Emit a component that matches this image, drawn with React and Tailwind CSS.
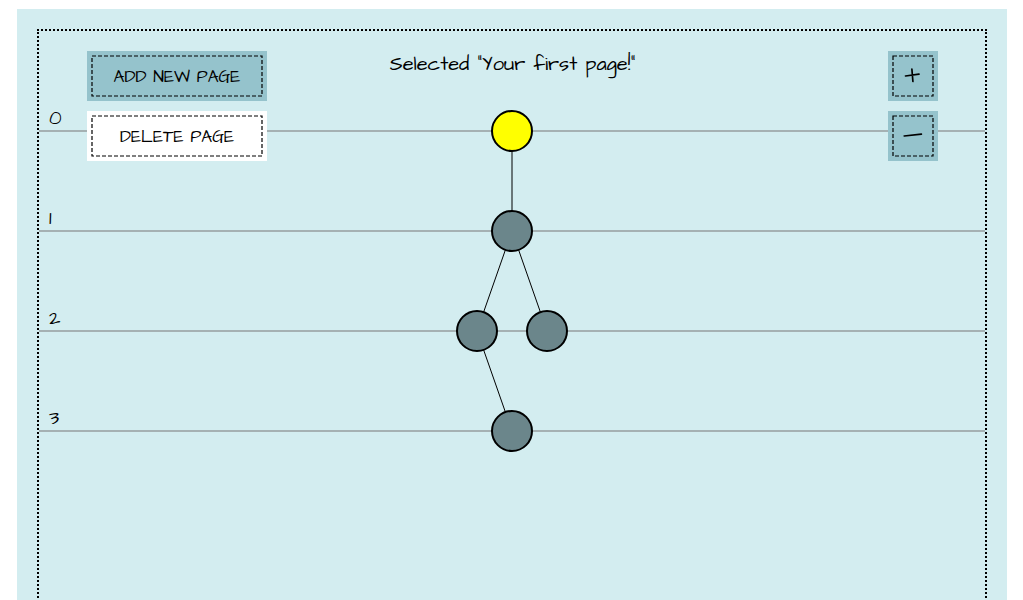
import React from "react";

const LEVELS = [0, 1, 2, 3];

const NODES = [
  { id: "first", x: 0, y: 100, selected: true },
  { id: "second", x: 0, y: 200 },
  { id: "left", x: -35, y: 300 },
  { id: "right", x: 35, y: 300 },
  { id: "last", x: 0, y: 400 },
];

const EDGES = [
  ["first", "second"],
  ["second", "left"],
  ["second", "right"],
  ["left", "last"],
];

const nodeById = (id) => NODES.find((node) => node.id === id);

function StitchedButton({ children, label, className }) {
  return (
    <button
      type="button"
      aria-label={label}
      className={`relative flex h-[50px] items-center justify-center text-black ${className}`}
    >
      <svg aria-hidden="true" className="absolute inset-[5px] h-[40px] w-[calc(100%-10px)] overflow-visible">
        <rect width="100%" height="100%" fill="none" stroke="#000" strokeWidth="1.2" strokeDasharray="4 2" />
      </svg>
      {children}
    </button>
  );
}

function HandDrawnIcon({ d }) {
  return (
    <svg viewBox="0 0 24 24" className="h-6 w-6" fill="none" stroke="#000" strokeWidth="1.7" strokeLinecap="round">
      <path d={d} />
    </svg>
  );
}

function Tree() {
  return (
    <svg
      role="img"
      aria-label="Page tree"
      viewBox="-60 0 120 440"
      className="absolute top-0 left-1/2 h-[440px] w-[120px] -translate-x-1/2"
    >
      {EDGES.map(([from, to]) => {
        const a = nodeById(from);
        const b = nodeById(to);
        return <line key={from + to} x1={a.x} y1={a.y} x2={b.x} y2={b.y} stroke="#000" />;
      })}
      {NODES.map((node) => (
        <circle
          key={node.id}
          cx={node.x}
          cy={node.y}
          r="20"
          stroke="#000"
          strokeWidth="2"
          fill={node.selected ? "#ffff00" : "#6b868b"}
        />
      ))}
    </svg>
  );
}

export default function App() {
  return (
    <div className="h-screen overflow-hidden bg-white pt-[9px] pr-4 pl-[17px] font-['Architects_Daughter','Inter',sans-serif] text-black">
      <main className="h-[calc(100vh+60px)] bg-[#d3edf0] p-5">
        <section className="relative h-full border-2 border-dotted border-black">
          <ol className="pt-px">
            {LEVELS.map((level) => (
              <li key={level} className="flex h-[100px] items-end border-b-2 border-[#a5b1b3] pl-[10px] text-xl leading-6">
                {level}
              </li>
            ))}
          </ol>
          <Tree />
          <header className="absolute top-5 right-[47px] left-12 flex items-start justify-between">
            <div className="flex w-[180px] flex-col gap-[10px] text-[17px]">
              <StitchedButton className="bg-[#95c3cc] pt-1">ADD NEW PAGE</StitchedButton>
              <StitchedButton className="bg-white pt-1">DELETE PAGE</StitchedButton>
            </div>
            <h1 className="text-xl leading-[26px]">Selected "Your first page!"</h1>
            <div className="flex w-[180px] flex-col items-end gap-[10px]">
              <StitchedButton label="Zoom in" className="w-[50px] bg-[#95c3cc]">
                <HandDrawnIcon d="M4.5 12L18 10.2M10.9 5.2L11.9 17.5" />
              </StitchedButton>
              <StitchedButton label="Zoom out" className="w-[50px] bg-[#95c3cc]">
                <HandDrawnIcon d="M3.2 12L20.4 10.2" />
              </StitchedButton>
            </div>
          </header>
        </section>
      </main>
    </div>
  );
}
